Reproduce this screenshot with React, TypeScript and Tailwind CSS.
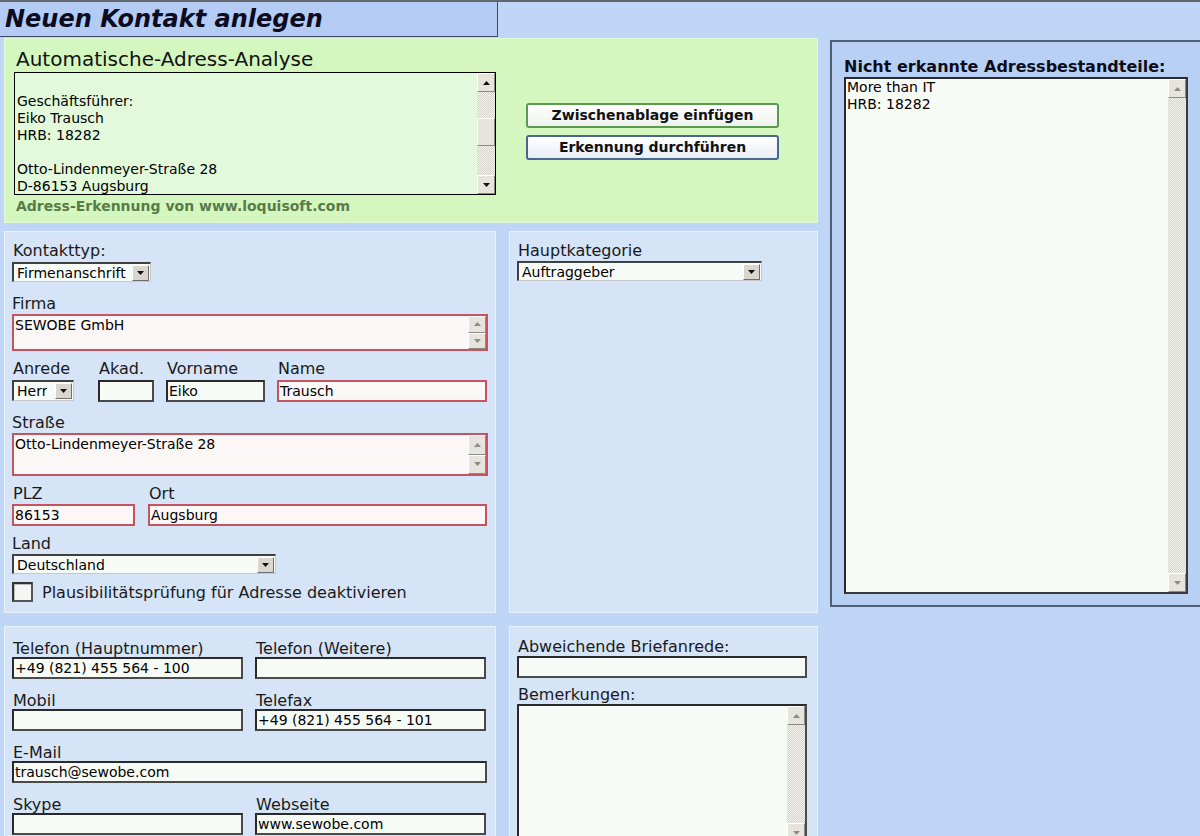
import React from "react";

const Tri = ({ up = false, dim = false }: { up?: boolean; dim?: boolean }) => (
  <svg width="7" height="4" viewBox="0 0 7 4">
    <path d={up ? "M0 4L3.5 0L7 4Z" : "M0 0L7 0L3.5 4Z"} fill={dim ? "#8c8c8c" : "#111"} />
  </svg>
);

const SBtn = ({ up = false, dim = false, className = "" }: { up?: boolean; dim?: boolean; className?: string }) => (
  <div
    className={`flex w-[18px] shrink-0 items-center justify-center border border-t-white border-l-white border-r-[#8a8a84] border-b-[#8a8a84] bg-[#e6e4dc] ${className}`}
  >
    <Tri up={up} dim={dim} />
  </div>
);

const Track = ({ className = "" }: { className?: string }) => (
  <div
    className={`w-[18px] bg-[repeating-conic-gradient(#d4d2ca_0%_25%,#f4f3ee_0%_50%)] bg-[length:2px_2px] ${className}`}
  />
);

const DropBtn = () => (
  <div className="flex h-[16px] w-[17px] shrink-0 items-center justify-center border border-t-white border-l-white border-r-[#6e6e6a] border-b-[#6e6e6a] bg-[#d8d6cf]">
    <Tri />
  </div>
);

const Select = ({ text, className = "" }: { text: string; className?: string }) => (
  <div
    className={`flex items-center justify-between border-t-2 border-l-2 border-r border-b border-t-[#404040] border-l-[#404040] border-r-[#c8c8c8] border-b-[#c8c8c8] bg-[#f7fbf7] pl-[3px] pr-[1px] text-[14px] leading-[16px] text-black ${className}`}
  >
    <span className="truncate">{text}</span>
    <DropBtn />
  </div>
);

const Input = ({ text = "", red = false, className = "" }: { text?: string; red?: boolean; className?: string }) => (
  <div
    className={`flex h-[22px] items-center px-[1px] text-[14px] text-black ${
      red
        ? "border-2 border-[#c45560] bg-[#fbf7f7]"
        : "border-2 border-t-[#2a2a2a] border-l-[#2a2a2a] border-r-[#4a4a4a] border-b-[#4a4a4a] bg-[#f6fbf6]"
    } ${className}`}
  >
    {text}
  </div>
);

const SmallArea = ({ text, className = "" }: { text: string; className?: string }) => (
  <div className={`flex border-2 border-[#c45560] bg-[#fbf7f7] ${className}`}>
    <div className="flex-1 px-[1px] pt-[1px] text-[14px] leading-[17px] text-black">{text}</div>
    <div className="flex flex-col">
      <SBtn up dim className="flex-1" />
      <SBtn dim className="flex-1" />
    </div>
  </div>
);

const Label = ({ children, className = "" }: { children: React.ReactNode; className?: string }) => (
  <div className={`text-[16px] leading-[17px] text-[#1a1a1a] ${className}`}>{children}</div>
);

export default function App() {
  return (
    <div className="h-[836px] w-[1200px] overflow-hidden border-t-2 border-[#62666e] bg-[#bfd6f7] font-['DejaVu_Sans',Verdana,sans-serif]">
      {/* Title bar */}
      <div className="flex h-[35px] w-[498px] items-center border-r border-b border-[#3b4866] bg-[#b4cbf3] pl-[5px]">
        <h1 className="text-[24px] font-bold italic leading-none text-[#0b0b22]">Neuen Kontakt anlegen</h1>
      </div>

      <div className="flex gap-[12px] pl-[4px]">
        {/* Left column */}
        <div className="flex w-[814px] shrink-0 flex-col pt-[1px]">
          {/* Green panel */}
          <div className="flex h-[185px] border border-[#e2f9d6] bg-[#d3f7bf] pt-[8px] pl-[9px]">
            <div className="flex w-[482px] flex-col">
              <div className="pl-[2px] text-[20px] leading-[24px] text-[#111]">Automatische-Adress-Analyse</div>
              <div className="mt-[1px] flex h-[123px] border border-black bg-[#e2fadb]">
                <div className="flex-1 pl-[2px] pt-[3px] text-[14px] leading-[17px] text-black">
                  <div>&nbsp;</div>
                  <div>Geschäftsführer:</div>
                  <div>Eiko Trausch</div>
                  <div>HRB: 18282</div>
                  <div>&nbsp;</div>
                  <div>Otto-Lindenmeyer-Straße 28</div>
                  <div>D-86153 Augsburg</div>
                </div>
                <div className="flex flex-col">
                  <SBtn up className="h-[19px]" />
                  <Track className="h-[26px]" />
                  <div className="h-[28px] w-[18px] border border-t-white border-l-white border-r-[#8a8a84] border-b-[#8a8a84] bg-[#e6e4dc]" />
                  <Track className="flex-1" />
                  <SBtn className="h-[19px]" />
                </div>
              </div>
              <div className="mt-[3px] pl-[2px] text-[14px] font-bold leading-[16px] text-[#5a7a4a]">
                Adress-Erkennung von www.loquisoft.com
              </div>
            </div>
            <div className="ml-[30px] mt-[56px] flex w-[253px] flex-col gap-[7px]">
              <button className="h-[25px] rounded-[3px] border-2 border-[#5b9a50] bg-[linear-gradient(#ffffff,#eef2ec)] text-[14px] font-bold text-[#111]">
                Zwischenablage einfügen
              </button>
              <button className="h-[25px] rounded-[3px] border-2 border-[#4a6690] bg-[linear-gradient(#ffffff,#e8eef6)] text-[14px] font-bold text-[#111]">
                Erkennung durchführen
              </button>
            </div>
          </div>

          {/* Middle row */}
          <div className="mt-[8px] flex h-[382px] gap-[13px]">
            <div className="flex w-[492px] flex-col border border-[#e8f0fb] bg-[#d6e4f7] pl-[7px] pt-[10px]">
              <Label className="pl-[1px]">Kontakttyp:</Label>
              <Select text="Firmenanschrift" className="mt-[3px] h-[20px] w-[139px]" />
              <Label className="mt-[13px]">Firma</Label>
              <SmallArea text="SEWOBE GmbH" className="mt-[2px] h-[37px] w-[476px]" />
              <div className="mt-[9px] flex">
                <div className="flex w-[86px] flex-col">
                  <Label className="pl-[1px]">Anrede</Label>
                  <Select text="Herr" className="mt-[3px] h-[21px] w-[62px]" />
                </div>
                <div className="flex w-[68px] flex-col">
                  <Label className="pl-[1px]">Akad.</Label>
                  <Input className="mt-[3px] w-[56px]" />
                </div>
                <div className="flex w-[111px] flex-col">
                  <Label className="pl-[1px]">Vorname</Label>
                  <Input text="Eiko" className="mt-[3px] w-[99px]" />
                </div>
                <div className="flex w-[210px] flex-col">
                  <Label className="pl-[1px]">Name</Label>
                  <Input red text="Trausch" className="mt-[3px] w-[210px]" />
                </div>
              </div>
              <Label className="mt-[12px]">Straße</Label>
              <SmallArea text="Otto-Lindenmeyer-Straße 28" className="mt-[2px] h-[43px] w-[476px]" />
              <div className="mt-[9px] flex gap-[13px]">
                <div className="flex w-[123px] flex-col">
                  <Label className="pl-[1px]">PLZ</Label>
                  <Input red text="86153" className="mt-[2px] w-[123px]" />
                </div>
                <div className="flex w-[339px] flex-col">
                  <Label className="pl-[1px]">Ort</Label>
                  <Input red text="Augsburg" className="mt-[2px] w-[339px]" />
                </div>
              </div>
              <Label className="mt-[9px]">Land</Label>
              <Select text="Deutschland" className="mt-[2px] h-[20px] w-[264px]" />
              <div className="mt-[8px] flex items-center gap-[9px]">
                <div className="h-[20px] w-[21px] border-2 border-t-[#333] border-l-[#333] border-r-[#555] border-b-[#555] bg-[#f4f6f4] shadow-[inset_1px_1px_0_#bbb]" />
                <span className="text-[16px] leading-[17px] text-[#1a1a1a]">
                  Plausibilitätsprüfung für Adresse deaktivieren
                </span>
              </div>
            </div>
            <div className="flex w-[309px] flex-col border border-[#e8f0fb] bg-[#d6e4f7] pl-[7px] pt-[10px]">
              <Label className="pl-[1px]">Hauptkategorie</Label>
              <Select text="Auftraggeber" className="mt-[2px] h-[20px] w-[245px]" />
            </div>
          </div>

          {/* Bottom row */}
          <div className="mt-[13px] flex h-[220px] gap-[13px]">
            <div className="flex w-[492px] flex-col border border-[#e8f0fb] bg-[#d6e4f7] pl-[7px] pt-[13px]">
              <div className="grid grid-cols-[231px_231px] gap-x-[12px]">
                <Label className="pl-[1px]">Telefon (Hauptnummer)</Label>
                <Label className="pl-[1px]">Telefon (Weitere)</Label>
                <Input text="+49 (821) 455 564 - 100" />
                <Input />
                <Label className="mt-[13px] pl-[1px]">Mobil</Label>
                <Label className="mt-[13px] pl-[1px]">Telefax</Label>
                <Input />
                <Input text="+49 (821) 455 564 - 101" />
                <Label className="col-span-2 mt-[13px] pl-[1px]">E-Mail</Label>
                <Input text="trausch@sewobe.com" className="col-span-2 w-[475px]" />
                <Label className="mt-[13px] pl-[1px]">Skype</Label>
                <Label className="mt-[13px] pl-[1px]">Webseite</Label>
                <Input />
                <Input text="www.sewobe.com" />
              </div>
            </div>
            <div className="flex w-[309px] flex-col border border-[#e8f0fb] bg-[#d6e4f7] pl-[7px] pt-[11px]">
              <Label className="pl-[1px]">Abweichende Briefanrede:</Label>
              <Input className="mt-[1px] w-[290px]" />
              <Label className="mt-[8px] pl-[1px]">Bemerkungen:</Label>
              <div className="mt-[1px] flex h-[140px] w-[290px] border-2 border-t-[#2a2a2a] border-l-[#2a2a2a] border-r-[#4a4a4a] border-b-[#4a4a4a] bg-[#f6fbf6]">
                <div className="flex-1" />
                <div className="flex flex-col">
                  <SBtn up dim className="h-[19px]" />
                  <Track className="flex-1" />
                  <SBtn dim className="h-[19px]" />
                </div>
              </div>
            </div>
          </div>
        </div>

        {/* Right panel */}
        <div className="mt-[3px] flex h-[567px] w-[380px] shrink-0 flex-col border-2 border-r-0 border-[#4f5d78] bg-[#b9d0f5] pl-[12px] pt-[15px]">
          <div className="text-[16px] font-bold leading-[19px] text-[#0d0d1a]">Nicht erkannte Adressbestandteile:</div>
          <div className="mt-[1px] flex h-[517px] w-[344px] border-2 border-t-[#2a2a2a] border-l-[#2a2a2a] border-r-[#3a3a3a] border-b-[#3a3a3a] bg-[#f6fbf6]">
            <div className="flex-1 pl-[1px] text-[14px] leading-[17px] text-black">
              <div>More than IT</div>
              <div>HRB: 18282</div>
            </div>
            <div className="flex flex-col">
              <SBtn up dim className="h-[19px]" />
              <Track className="flex-1" />
              <SBtn dim className="h-[19px]" />
            </div>
          </div>
        </div>
      </div>
    </div>
  );
}
